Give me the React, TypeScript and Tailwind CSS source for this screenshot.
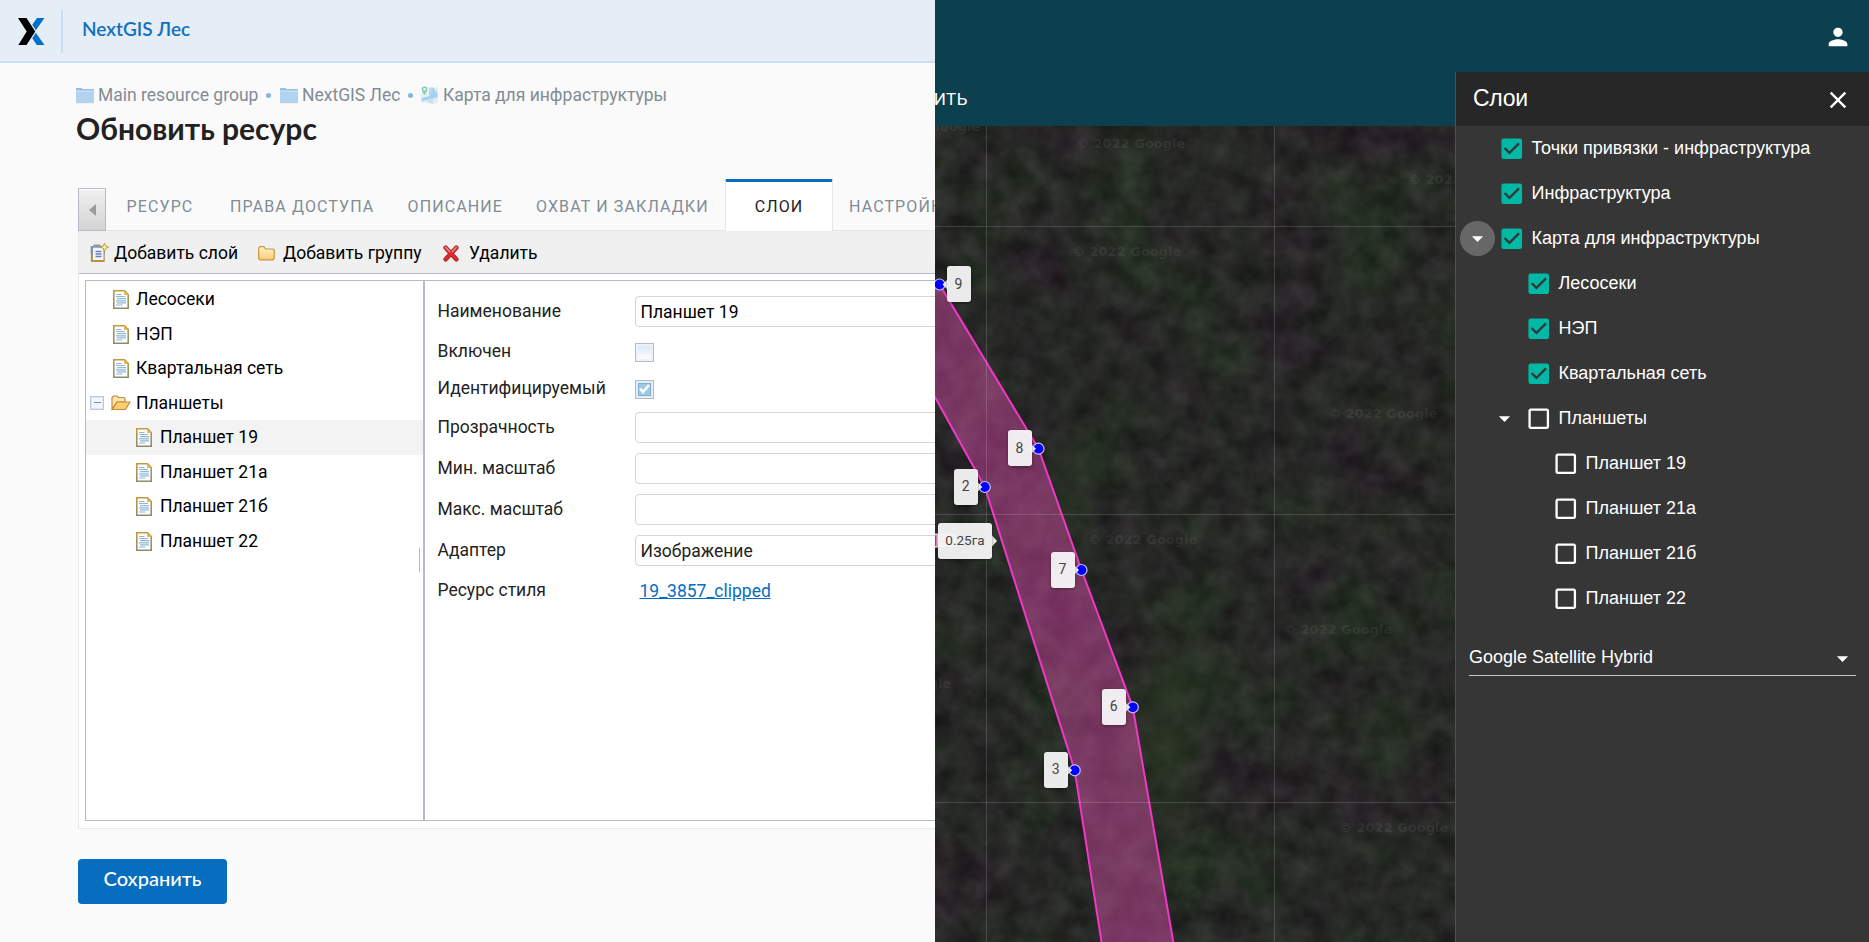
import type { ReactNode } from 'react';
import { MdArrowDropDown, MdCheckBox, MdCheckBoxOutlineBlank, MdClose, MdPerson } from 'react-icons/md';

const ROBOTO = "font-['Roboto','Liberation_Sans',sans-serif]";
const LATO = "font-['Lato','Liberation_Sans',sans-serif]";

/* ---------- icons ---------- */

const Logo = () => (
  <svg width="27" height="27" viewBox="0 0 27 27">
    <path d="M19 0H26.500L17.800 12.300 14.300 6.800z" fill="#0070c9" />
    <path d="M18.800 27H26.500L17.800 14.700 14.300 20.200z" fill="#0070c9" />
    <path d="M0 0H8.500L17.200 13.500 8.500 27H0.300L8.700 13.500z" fill="#000" />
  </svg>
);

const CrumbFolder = () => (
  <svg width="18" height="17" viewBox="0 0 18 17">
    <path d="M0 1h5.500l1.200 1H18v4H0z" fill="#90c2e8" />
    <path d="M0 3.500h18v12.700H0z" fill="#b1d3f0" />
    <path d="M0 3.500h18v1.200H0z" fill="#c9e1f5" />
  </svg>
);

const CrumbMap = () => (
  <svg width="18" height="19" viewBox="0 0 18 19">
    <path d="M0.500 2l5.500-1 6 1 5-1v16l-5 1.500-6-2-5.500 1z" fill="#e3eff7" />
    <path d="M8 2l4-1 5 6v4l-9 2z" fill="#bcdcf0" />
    <path d="M12 1.500l4 7.500v2.500l-10 2.500-5.500 1.300v-3.300l8-2z" fill="#a5d3ee" />
    <path d="M6 15l6-2v5l-6-2z" fill="#cfdde8" />
    <path d="M3.500 0.500a2.700 2.700 0 0 1 2.700 2.700c0 2-2.700 5.800-2.700 5.800S0.800 5.200 0.800 3.200A2.700 2.700 0 0 1 3.500 0.500z" fill="#7fd0a4" />
    <circle cx="3.500" cy="3.200" r="1.200" fill="#fff" />
  </svg>
);

const DocIcon = () => (
  <svg width="16" height="19" viewBox="0 0 16 19" className="shrink-0">
    <defs>
      <linearGradient id="docEdge" x1="0" y1="0" x2="0" y2="1">
        <stop offset="0" stopColor="#c39b3e" />
        <stop offset="1" stopColor="#8f8c6c" />
      </linearGradient>
    </defs>
    <path d="M0.800 0.800H11.500l3.700 3.700v13.700H0.800z" fill="#fdfefe" stroke="url(#docEdge)" strokeWidth="1.600" />
    <path d="M11 1.200v3.800h4z" fill="#e9b758" />
    <path d="M3 4.500h5.500M3 6.500h9M4 8.700h9M3 10.800h10M4 12.900h9M3 15h6.500" stroke="#8fb6dc" strokeWidth="1.200" />
  </svg>
);

const OpenFolder = () => (
  <svg width="20" height="16" viewBox="0 0 20 16" className="shrink-0">
    <path d="M1 14V2.500L2.500 1H6l1.500 1.500H13l1 1V7H6z" fill="#fbe5b0" stroke="#c48a3c" strokeWidth="1.200" />
    <path d="M1.200 14.500L6 7h13l-4.500 7.500z" fill="#fbcd6c" stroke="#c48a3c" strokeWidth="1.200" strokeLinejoin="round" />
  </svg>
);

const ClosedFolder = () => (
  <svg width="17" height="15" viewBox="0 0 17 15">
    <defs>
      <linearGradient id="folderFill" x1="0" y1="0" x2="0" y2="1">
        <stop offset="0" stopColor="#fff3c9" />
        <stop offset="1" stopColor="#f8cd77" />
      </linearGradient>
    </defs>
    <path d="M0.700 12.500V2L2 0.700h4L7.500 3h7.500l1.200 1v8.500l-1.200 1.300H2z" fill="url(#folderFill)" stroke="#c8963f" strokeWidth="1.200" />
  </svg>
);

const ClipboardIcon = () => (
  <svg width="19" height="20" viewBox="0 0 19 20">
    <rect x="0.800" y="3" width="14" height="16" rx="1" fill="#b9924a" />
    <rect x="0.800" y="3" width="14" height="8" rx="1" fill="#7a8fb8" />
    <path d="M3 4.500h10.500V17H3z" fill="#f4f6fd" />
    <path d="M3.500 1.500h7v3h-7z" fill="#8a98ae" />
    <path d="M5.500 8.500h6M5.500 11h6M5.500 13.500h6" stroke="#6d7fc4" strokeWidth="1.300" />
    <path d="M14.500 0l1.200 3 3 1.200-3 1.200-1.200 3-1.200-3-3-1.200 3-1.200z" fill="#fff2a0" stroke="#b9962f" strokeWidth="0.900" />
  </svg>
);

const DeleteIcon = () => (
  <svg width="16" height="17" viewBox="0 0 16 17">
    <path d="M2.700 2.700l10.600 11.600M13.300 2.700L2.700 14.300" stroke="#9c2a2a" strokeWidth="4.600" strokeLinecap="round" />
    <path d="M2.700 2.700l10.600 11.600M13.300 2.700L2.700 14.300" stroke="#dd2a2a" strokeWidth="3" strokeLinecap="round" />
    <path d="M2.700 2.400l4 4.200M13.300 2.400l-4 4.200" stroke="#ec8080" strokeWidth="1.600" strokeLinecap="round" />
  </svg>
);

const Expander = () => (
  <span className="flex size-[14px] shrink-0 items-center justify-center border border-[#bcc8de] bg-[#f3f6fb] shadow-[inset_0_0_0_1px_#dfe6f2]">
    <span className="h-px w-[7px] bg-[#7c8bb5]" />
  </span>
);

/* ---------- resource editor ---------- */

const Dot = () => <span className="size-[5px] rounded-full bg-[#83b7e0]" />;

const Tab = ({ className, children }: { className: string; children: ReactNode }) => (
  <div className={`flex h-[49px] items-center pt-[3px] text-base tracking-[1.120px] whitespace-nowrap text-[#828c95] ${className}`}>{children}</div>
);

function TreeItem({ label, indent }: { label: string; indent?: boolean }) {
  return (
    <div className={`flex h-[34.500px] items-center ${indent ? 'gap-2 pl-[50px]' : 'gap-[7px] pl-[27px]'}`}>
      <span className="pt-px"><DocIcon /></span>
      <span>{label}</span>
    </div>
  );
}

const Field = ({ label, children, className }: { label: string; children: ReactNode; className: string }) => (
  <div className={`flex items-center ${className}`}>
    <span className="w-[197px] shrink-0 text-[#222]">{label}</span>
    {children}
  </div>
);

const TextBox = ({ value = '', className = '' }: { value?: string; className?: string }) => (
  <div className={`flex h-[31px] w-[320px] shrink-0 items-center rounded-[4px] border border-[#d2d5d9] bg-white pt-px pl-[5px] ${className}`}>{value}</div>
);

function Editor() {
  return (
    <section className={`flex w-[935px] shrink-0 flex-col overflow-hidden bg-[#fafafa] text-[17.500px] ${ROBOTO}`}>
      <header className="flex h-[63px] shrink-0 border-b-2 border-[#cbdff3] bg-[#e5edf7]">
        <div className="flex w-[61px] pt-[18px] pl-[18px]"><Logo /></div>
        <div className="mt-[10px] h-[43px] w-[2px] bg-[#cbdff3]" />
        <div className={`mt-[14px] ml-[19px] text-[19px] leading-[30px] font-semibold text-[#1070c0] ${LATO}`}>NextGIS Лес</div>
      </header>

      <nav className="mt-5 flex h-6 shrink-0 items-center pl-[76px] whitespace-nowrap text-[#828c95]">
        <CrumbFolder />
        <span className="w-[168px] pl-[4px]">Main resource group</span>
        <span className="flex w-[18px] justify-start pl-[4px]"><Dot /></span>
        <CrumbFolder />
        <span className="w-[105px] pl-[4px]">NextGIS Лес</span>
        <span className="flex w-[18px] pl-[5px]"><Dot /></span>
        <CrumbMap />
        <span className="pl-[4px]">Карта для инфраструктуры</span>
      </nav>
      <h1 className={`mt-[3px] h-[36px] shrink-0 pl-[76px] text-[30px] leading-[37px] font-bold text-[#222] ${LATO}`}>Обновить ресурс</h1>

      <div className="mt-[33px] ml-[78px] flex h-[52px] w-[900px] shrink-0 items-end">
        <div className="flex h-[43px] w-7 shrink-0 items-center justify-center border border-[#b5bcc7] bg-gradient-to-b from-[#f0f0f0] to-[#d4d4d4] shadow-[inset_0_1px_0_#fff]">
          <svg width="7" height="12" viewBox="0 0 7 12"><path d="M7 0v12L0 6z" fill="#9a9a9a" /></svg>
        </div>
        <div className="flex h-[52px] grow items-end border-b border-[#e5e6e8]">
          <Tab className="w-[103px] pl-[20.500px]">РЕСУРС</Tab>
          <Tab className="w-[177px] pl-[21px]">ПРАВА ДОСТУПА</Tab>
          <Tab className="w-[129px] pl-[21.500px]">ОПИСАНИЕ</Tab>
          <Tab className="w-[210px] pl-[21px]">ОХВАТ И ЗАКЛАДКИ</Tab>
          <div className="-mb-px flex h-[52px] w-[108px] shrink-0 items-center justify-center rounded-t-[2px] border-x border-t-[3px] border-x-[#e5e6e8] border-t-[#076dbf] bg-white pt-px text-base tracking-[1.120px] text-[#222]">СЛОИ</div>
          <Tab className="pl-[16px]">НАСТРОЙКИ</Tab>
        </div>
      </div>

      <div className="ml-[78px] flex h-[598px] w-[900px] shrink-0 flex-col border-b border-l border-[#e8e9eb] bg-white">
        <div className="flex h-[43px] shrink-0 items-center border-b border-[#b5bacb] bg-[#f0f0f0] pt-[2px] pl-[11px] whitespace-nowrap text-black">
          <ClipboardIcon />
          <span className="w-[149px] pl-[5px]">Добавить слой</span>
          <ClosedFolder />
          <span className="w-[168px] pl-[8px]">Добавить группу</span>
          <DeleteIcon />
          <span className="pl-[10px]">Удалить</span>
        </div>
        <div className="mt-[6px] ml-[6px] flex h-[541px] shrink-0 border border-[#b5bacb]">
          <div className="flex w-[339px] shrink-0 border-r-2 border-[#b5bacb] text-black">
            <div className="flex grow flex-col pt-px">
              <TreeItem label="Лесосеки" />
              <TreeItem label="НЭП" />
              <TreeItem label="Квартальная сеть" />
              <div className="flex h-[34.500px] items-center pl-[4px]">
                <Expander />
                <span className="w-[32px] pl-[7px]"><OpenFolder /></span>
                <span>Планшеты</span>
              </div>
              <div className="bg-[#f3f3f3]"><TreeItem label="Планшет 19" indent /></div>
              <TreeItem label="Планшет 21а" indent />
              <TreeItem label="Планшет 21б" indent />
              <TreeItem label="Планшет 22" indent />
            </div>
            <div className="-ml-1 mr-[3px] mt-[267px] h-[24px] w-px bg-[#b5bacb]" />
          </div>
          <div className="flex grow flex-col pt-[15px] pl-[12.500px]">
            <Field label="Наименование" className="h-[31px]"><TextBox value="Планшет 19" className="text-black" /></Field>
            <Field label="Включен" className="mt-[8px] h-[32px]">
              <span className="mt-[2px] flex size-[19px] border border-[#b5bacb] bg-[#eef2f7] p-[2px]"><span className="grow bg-gradient-to-b from-[#dbe8f2] to-[#fdfeff]" /></span>
            </Field>
            <Field label="Идентифицируемый" className="mt-[5px] h-[32px]">
              <span className="mt-[2px] flex size-[19px] border border-[#b5bacb] bg-[#e4ecf4] p-[2px]">
                <span className="flex grow items-center justify-center border border-[#7fafd2] bg-[#9fc8e4]">
                  <svg width="11" height="10" viewBox="0 0 11 10"><path d="M1 4.500l3 3.500L10 1" fill="none" stroke="#fff" strokeWidth="2.600" /></svg>
                </span>
              </span>
            </Field>
            <Field label="Прозрачность" className="mt-[8px] h-[31px]"><TextBox /></Field>
            <Field label="Мин. масштаб" className="mt-[10px] h-[31px]"><TextBox /></Field>
            <Field label="Макс. масштаб" className="mt-[10px] h-[31px]"><TextBox /></Field>
            <Field label="Адаптер" className="mt-[10px] h-[31px]"><TextBox value="Изображение" className="text-[#222]" /></Field>
            <Field label="Ресурс стиля" className="mt-[9px] h-[31px]">
              <span className="pt-[2px] pl-[5px] text-[#076dbf] underline">19_3857_clipped</span>
            </Field>
          </div>
        </div>
      </div>

      <button className={`mt-[30px] ml-[78px] h-[45px] w-[149px] shrink-0 rounded-[4px] bg-[#076dbf] pb-[7px] text-[20px] font-medium text-white ${LATO}`}>Сохранить</button>
    </section>
  );
}

/* ---------- map ---------- */

const MAP_X = 935;
const MAP_Y = 126;

const points = [
  { n: '9', x: 939.5, y: 284.5, right: true },
  { n: '8', x: 1038.5, y: 448.700, right: false },
  { n: '2', x: 984.800, y: 487, right: false },
  { n: '7', x: 1081.500, y: 570, right: false },
  { n: '6', x: 1132.800, y: 707.300, right: false },
  { n: '3', x: 1074.700, y: 770.300, right: false },
];

const watermarks = [
  { x: 871, y: 131 }, { x: 1076, y: 148 }, { x: 1072, y: 256 }, { x: 1408, y: 184 }, { x: 1328, y: 418 },
  { x: 1088, y: 544 }, { x: 1283, y: 634 }, { x: 1339, y: 832 }, { x: 842, y: 688 },
];

function MapView() {
  return (
    <div className="relative h-[816px] w-[520px] shrink-0 overflow-hidden bg-[#242823]">
      <svg width="520" height="816" viewBox="935 126 520 816" className="block">
        <defs>
          <filter id="forest" x="0" y="0" width="1" height="1" colorInterpolationFilters="sRGB">
            <feTurbulence type="fractalNoise" baseFrequency="0.042" numOctaves="3" seed="7" result="fine" />
            <feColorMatrix in="fine" values="0.150 0 0 0 0.075  0.150 0 0 0 0.075  0.150 0 0 0 0.075  0 0 0 0 1" result="fineTone" />
            <feTurbulence type="fractalNoise" baseFrequency="0.012" numOctaves="4" seed="21" result="coarse" />
            <feColorMatrix in="coarse" values="0 -0.020 0 0 0.085  0 0.090 0 0 0.038  0 -0.030 0 0 0.086  0 0 0 0 1" result="coarseTone" />
            <feComposite in="fineTone" in2="coarseTone" operator="arithmetic" k1="0" k2="1" k3="1" k4="-0.075" />
          </filter>
          <radialGradient id="meadow">
            <stop offset="0" stopColor="#2c4022" stopOpacity="0.550" />
            <stop offset="1" stopColor="#2c4022" stopOpacity="0" />
          </radialGradient>
        </defs>
        <rect x="935" y="126" width="520" height="816" filter="url(#forest)" />
        <ellipse cx="1165" cy="735" rx="60" ry="160" fill="url(#meadow)" />
        <ellipse cx="1065" cy="500" rx="40" ry="90" fill="url(#meadow)" opacity="0.600" />
        <g fill="#fff" fillOpacity="0.080" fontFamily="DejaVu Sans, sans-serif" fontWeight="700" fontSize="13">
          {watermarks.map((w) => <text key={`${w.x}-${w.y}`} x={w.x} y={w.y}>© 2022 Google</text>)}
        </g>
        <path d="M920 370L984.800 487L1074.700 770.300L1102 945H1173.800L1132.800 707.300L1081.500 570L1038.500 448.700L939.500 284.500L920 284z" fill="#e94fb4" fillOpacity="0.420" stroke="#f037c6" strokeWidth="2" />
        <path d="M986.500 126V942M1274.500 126V942M935 226.500H1455M935 514.500H1455M935 802.500H1455" stroke="#fff" strokeOpacity="0.150" />
        {points.map((p) => <circle key={p.n} cx={p.x} cy={p.y} r="5.500" fill="#00f" stroke="#c9c6ee" strokeWidth="1.200" />)}
        {points.map((p) => (
          <path key={p.n} fill="#f3f1f3" d={p.right ? `M${p.x + 8} ${p.y - 5}l-5 5 5 5z` : `M${p.x - 7.500} ${p.y - 5}l5 5-5 5z`} />
        ))}
        <text x="931" y="546" fontFamily="Roboto, sans-serif" fontSize="14" fontWeight="700" fill="#e03030" stroke="#f8dede" strokeWidth="3" paintOrder="stroke">193</text>
        <path d="M992 535.500l5 5.500-5 5.500z" fill="#efefef" />
      </svg>
      {points.map((p) => (
        <div
          key={p.n}
          className={`absolute flex h-9 w-6 items-center justify-center rounded-[3px] bg-[#f7f5f7]/95 text-[14px] text-[#444] shadow-[0_1px_3px_rgba(0,0,0,0.4)] ${ROBOTO}`}
          style={{ left: (p.right ? p.x + 7 : p.x - 31) - MAP_X, top: p.y - 18.5 - MAP_Y }}
        >
          {p.n}
        </div>
      ))}
      <div className={`absolute top-[397px] left-[3px] flex h-9 w-[54px] items-center justify-center rounded-[3px] bg-[#f7f7f7]/95 pb-px text-[13.500px] text-[#444] shadow-[0_1px_3px_rgba(0,0,0,0.4)] ${ROBOTO}`}>0.25га</div>
    </div>
  );
}

/* ---------- layers panel ---------- */

type Layer = { label: string; level: 0 | 1 | 2; on: boolean; arrow?: 'plain' | 'round' };

const layers: Layer[] = [
  { label: 'Точки привязки - инфраструктура', level: 0, on: true },
  { label: 'Инфраструктура', level: 0, on: true },
  { label: 'Карта для инфраструктуры', level: 0, on: true, arrow: 'round' },
  { label: 'Лесосеки', level: 1, on: true },
  { label: 'НЭП', level: 1, on: true },
  { label: 'Квартальная сеть', level: 1, on: true },
  { label: 'Планшеты', level: 1, on: false, arrow: 'plain' },
  { label: 'Планшет 19', level: 2, on: false },
  { label: 'Планшет 21а', level: 2, on: false },
  { label: 'Планшет 21б', level: 2, on: false },
  { label: 'Планшет 22', level: 2, on: false },
];

const indents = ['pl-[4px]', 'pl-[31px]', 'pl-[58px]'];

function LayersPanel() {
  return (
    <aside className="flex h-[870px] w-[414px] shrink-0 flex-col border-l border-[#505050] bg-[#363636] font-['Liberation_Sans',Arial,sans-serif] text-lg text-white">
      <div className="flex h-[54px] shrink-0 items-center justify-between bg-[#272727] pt-px pr-[17.500px] pl-[17px] text-[23px]">
        <span className="pb-[2px] tracking-[-0.300px]">Слои</span>
        <MdClose size={28} />
      </div>
      <div className="flex flex-col">
        {layers.map((l) => (
          <div key={l.label} className={`flex h-[45px] items-center ${indents[l.level]}`}>
            <span className={`flex size-[35px] items-center justify-center rounded-full ${l.arrow === 'round' ? 'bg-[#676767]' : ''}`}>
              {l.arrow && <MdArrowDropDown size={27} />}
            </span>
            {l.on ? <MdCheckBox size={27.5} className="ml-[3px] text-[#00b8a6]" /> : <MdCheckBoxOutlineBlank size={27.5} className="ml-[3px]" />}
            <span className="pb-[2px] pl-[6px]">{l.label}</span>
          </div>
        ))}
      </div>
      <div className="mt-[20px] mr-[13px] ml-[13px] flex h-[35px] items-center justify-between border-b border-[#c8c8c8]">
        <span className="pb-[2px]">Google Satellite Hybrid</span>
        <MdArrowDropDown size={27} />
      </div>
    </aside>
  );
}

export default function App() {
  return (
    <div className="flex h-[942px] w-[1869px] overflow-hidden">
      <Editor />
      <section className="flex w-[934px] shrink-0 bg-[#0d404e]">
        <div className="flex w-[520px] flex-col">
          <div className="flex h-[126px] shrink-0 items-end overflow-hidden pb-[15px]">
            <span className={`flex w-[33px] shrink-0 justify-end text-[17px] leading-[24px] tracking-[0.500px] text-white ${ROBOTO}`}>ИТЬ</span>
          </div>
          <MapView />
        </div>
        <div className="flex flex-col">
          <div className="flex h-[72px] shrink-0 items-center justify-end pr-[17.500px] pt-px text-white"><MdPerson size={28} /></div>
          <LayersPanel />
        </div>
      </section>
    </div>
  );
}
